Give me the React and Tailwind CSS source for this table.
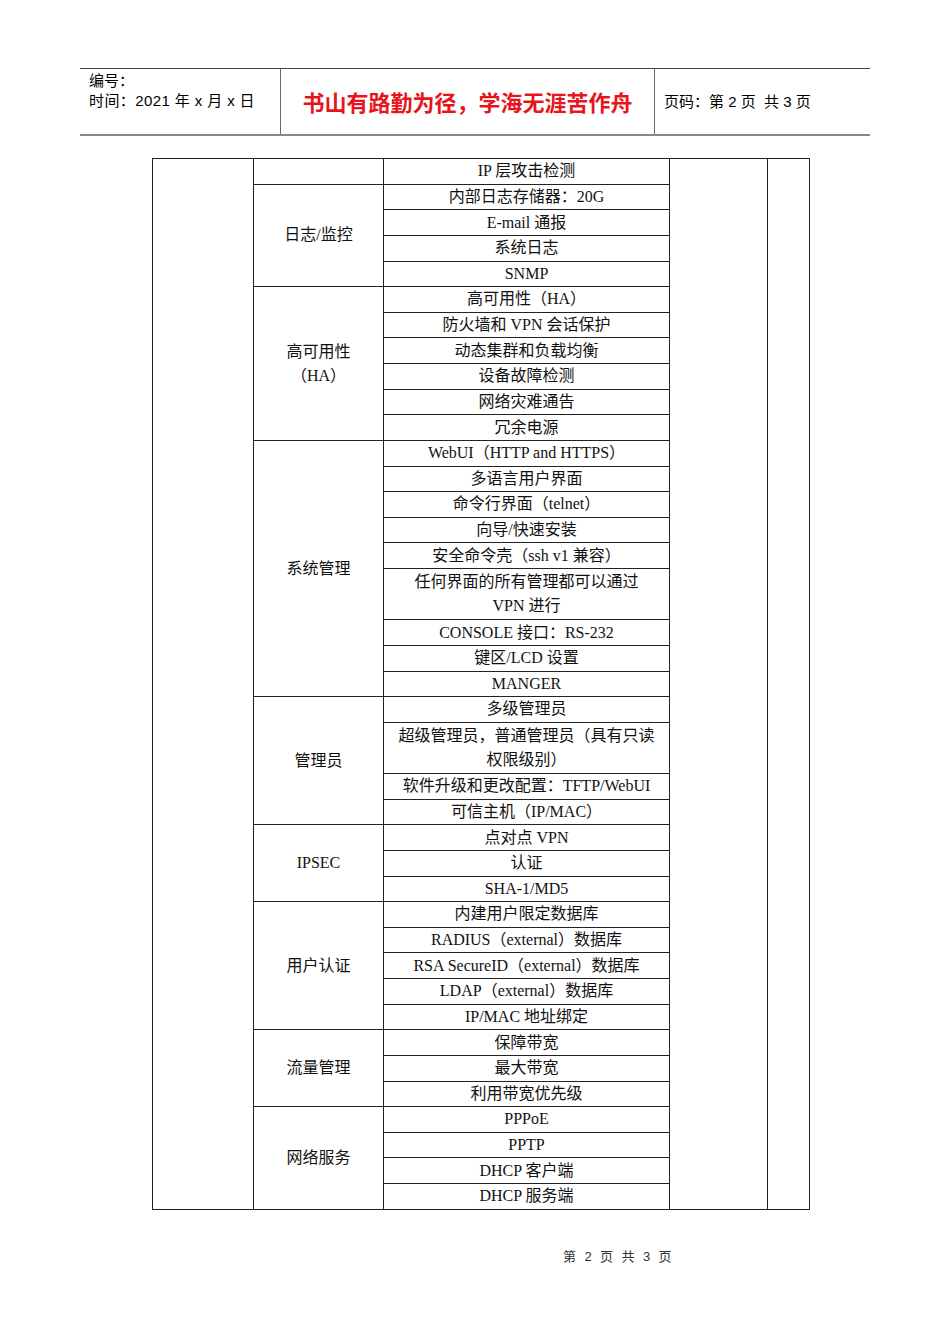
import React from 'react';

const groups = [
  { label: '', items: ['IP 层攻击检测'] },
  { label: '日志/监控', items: ['内部日志存储器：20G', 'E-mail 通报', '系统日志', 'SNMP'] },
  {
    label: ['高可用性', '（HA）'],
    items: ['高可用性（HA）', '防火墙和 VPN 会话保护', '动态集群和负载均衡', '设备故障检测', '网络灾难通告', '冗余电源'],
  },
  {
    label: '系统管理',
    items: [
      'WebUI（HTTP and HTTPS）',
      '多语言用户界面',
      '命令行界面（telnet）',
      '向导/快速安装',
      '安全命令壳（ssh v1 兼容）',
      ['任何界面的所有管理都可以通过', 'VPN 进行'],
      'CONSOLE 接口：RS-232',
      '键区/LCD 设置',
      'MANGER',
    ],
  },
  {
    label: '管理员',
    items: ['多级管理员', ['超级管理员，普通管理员（具有只读', '权限级别）'], '软件升级和更改配置：TFTP/WebUI', '可信主机（IP/MAC）'],
  },
  { label: 'IPSEC', items: ['点对点 VPN', '认证', 'SHA-1/MD5'] },
  {
    label: '用户认证',
    items: ['内建用户限定数据库', 'RADIUS（external）数据库', 'RSA SecureID（external）数据库', 'LDAP（external）数据库', 'IP/MAC 地址绑定'],
  },
  { label: '流量管理', items: ['保障带宽', '最大带宽', '利用带宽优先级'] },
  { label: '网络服务', items: ['PPPoE', 'PPTP', 'DHCP 客户端', 'DHCP 服务端'] },
];

const totalRows = groups.reduce((n, g) => n + g.items.length, 0);

const cell = 'border border-[#222] p-0 text-center align-middle';

const App = () => {
  const rows = [];
  groups.forEach((g, gi) => {
    g.items.forEach((item, ii) => {
      const multi = Array.isArray(item);
      rows.push(
        <tr key={`${gi}-${ii}`}>
          {gi === 0 && ii === 0 && <td rowSpan={totalRows} className={cell}></td>}
          {ii === 0 && (
            <td rowSpan={g.items.length} className={cell}>
              {Array.isArray(g.label) ? g.label.map((l) => <div key={l}>{l}</div>) : g.label}
            </td>
          )}
          <td className={`${cell} ${multi ? 'h-[51.25px]' : 'h-[25.63px]'}`}>
            {multi ? item.map((l) => <div key={l}>{l}</div>) : item}
          </td>
          {gi === 0 && ii === 0 && (
            <>
              <td rowSpan={totalRows} className={cell}></td>
              <td rowSpan={totalRows} className={cell}></td>
            </>
          )}
        </tr>
      );
    });
  });

  return (
    <div className="w-[950px] min-h-[1344px] bg-white relative">
      {/* page header */}
      <div className="pt-[68px] px-[80px]">
        <div className="flex h-[68px] border-t border-[#444] border-b-2 border-b-[#888] font-['Liberation_Sans','Noto_Sans_CJK_SC',sans-serif] text-[15px] text-black">
          <div className="w-[201px] pl-[9px] pt-[2px] leading-[20px] border-r border-[#666]">
            <div>编号：</div>
            <div className="tracking-[0.4px]">时间：2021 年 x 月 x 日</div>
          </div>
          <div className="w-[374px] flex items-center justify-center border-r border-[#666] text-[22px] font-bold text-[#e8141b] pt-[3px]">
            书山有路勤为径，学海无涯苦作舟
          </div>
          <div className="flex-1 flex items-center pl-[9px] pt-[2px]">页码：第 2 页&nbsp;&nbsp;共 3 页</div>
        </div>
      </div>

      {/* spec table */}
      <div className="pt-[22px] pl-[152px]">
        <table className="table-fixed border-collapse w-[657px] font-['Liberation_Serif','Noto_Sans_CJK_SC',serif] text-[16px] leading-[24px] text-[#111]">
          <colgroup>
            <col className="w-[101px]" />
            <col className="w-[130px]" />
            <col className="w-[286px]" />
            <col className="w-[98px]" />
            <col className="w-[42px]" />
          </colgroup>
          <tbody>{rows}</tbody>
        </table>
      </div>

      {/* footer */}
      <div className="absolute top-[1247px] left-[563px] font-['Liberation_Sans','Noto_Sans_CJK_SC',sans-serif] text-[13px] text-[#333] tracking-[2.4px]">
        第 2 页 共 3 页
      </div>
    </div>
  );
};

export default App;
